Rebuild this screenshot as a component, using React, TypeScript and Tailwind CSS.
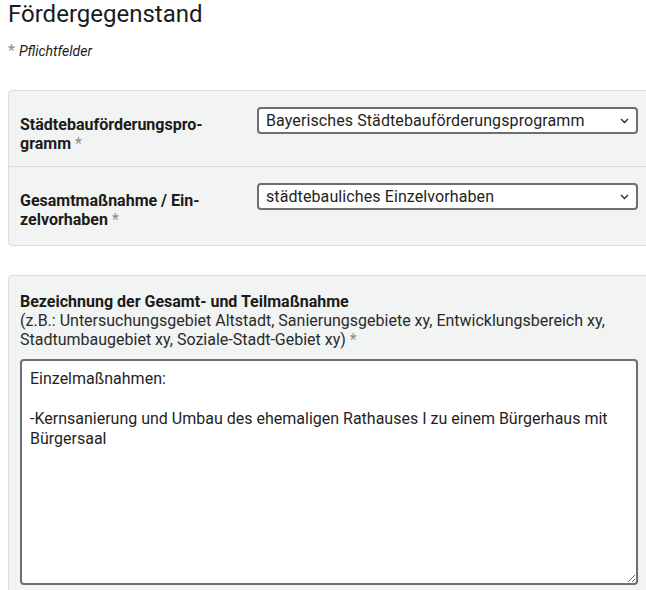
import React from "react";

const Star = () => <span className="text-[#8a8f94] font-normal"> *</span>;

const Chevron = () => (
  <svg width="9" height="6" viewBox="0 0 9 6" className="shrink-0">
    <path d="M1 1l3.5 3.5L8 1" fill="none" stroke="#2b2b2b" strokeWidth="1.4" />
  </svg>
);

type SelectProps = { value: string };

const FakeSelect = ({ value }: SelectProps) => (
  <div className="flex items-center justify-between h-[27px] border-2 border-[#6b6f73] rounded-[4px] bg-white pl-[7px] pr-[7px]">
    <span className="text-[16px] leading-[19px] tracking-[0.1px] text-[#1f1f1f] truncate">{value}</span>
    <Chevron />
  </div>
);

const text =
  "Einzelmaßnahmen:\n\n-Kernsanierung und Umbau des ehemaligen Rathauses I zu einem Bürgerhaus mit Bürgersaal";

export default function App() {
  return (
    <div
      className="w-full h-[590px] overflow-hidden bg-white text-[#1b1b1b]"
      style={{ fontFamily: "Roboto, 'Liberation Sans', sans-serif" }}
    >
      <div className="pl-2">
        <h1 className="text-[24px] leading-[29px] font-normal text-[#1b1b1b]">Fördergegenstand</h1>
        <p className="mt-[13px] h-[18px] flex items-center gap-[4px] text-[14px] leading-[18px] italic">
          <span className="not-italic text-[#8a8f94] text-[16px] leading-[18px]">*</span>
          <span>Pflichtfelder</span>
        </p>

        <div className="mt-[30px] w-[642px] bg-[#f2f3f3] border border-[#dcdcdc] rounded-[4px]">
          <div className="flex pl-[11px] pr-[11px] pt-4 pb-[13px] border-b border-[#dcdcdc]">
            <div className="w-[237px] shrink-0 pt-[8px] text-[16px] leading-[19px] font-bold">
              Städtebauförderungspro-
              <br />
              gramm
              <Star />
            </div>
            <div className="flex-1">
              <FakeSelect value="Bayerisches Städtebauförderungsprogramm" />
            </div>
          </div>
          <div className="flex pl-[11px] pr-[11px] pt-4 pb-[16px]">
            <div className="w-[237px] shrink-0 pt-[8px] text-[16px] leading-[19px] font-bold">
              Gesamtmaßnahme / Ein-
              <br />
              zelvorhaben
              <Star />
            </div>
            <div className="flex-1">
              <FakeSelect value="städtebauliches Einzelvorhaben" />
            </div>
          </div>
        </div>

        <div className="mt-[29px] w-[642px] bg-[#f2f3f3] border border-[#dcdcdc] rounded-[4px] px-[11px] pt-4 pb-6">
          <label className="block text-[16px] leading-[19px]">
            <span className="block font-bold">Bezeichnung der Gesamt- und Teilmaßnahme</span>
            <span className="block font-normal text-[#2a2a2a]">
              (z.B.: Untersuchungsgebiet Altstadt, Sanierungsgebiete xy, Entwicklungsbereich xy,
              Stadtumbaugebiet xy, Soziale-Stadt-Gebiet xy) <span className="text-[#8a8f94]">*</span>
            </span>
          </label>
          <textarea
            className="mt-[10px] block w-full h-[226px] border-2 border-[#6b6f73] rounded-[4px] bg-white px-2 py-2 text-[16px] leading-[20px] text-[#1f1f1f] outline-none"
            defaultValue={text}
          />
        </div>
      </div>
    </div>
  );
}
